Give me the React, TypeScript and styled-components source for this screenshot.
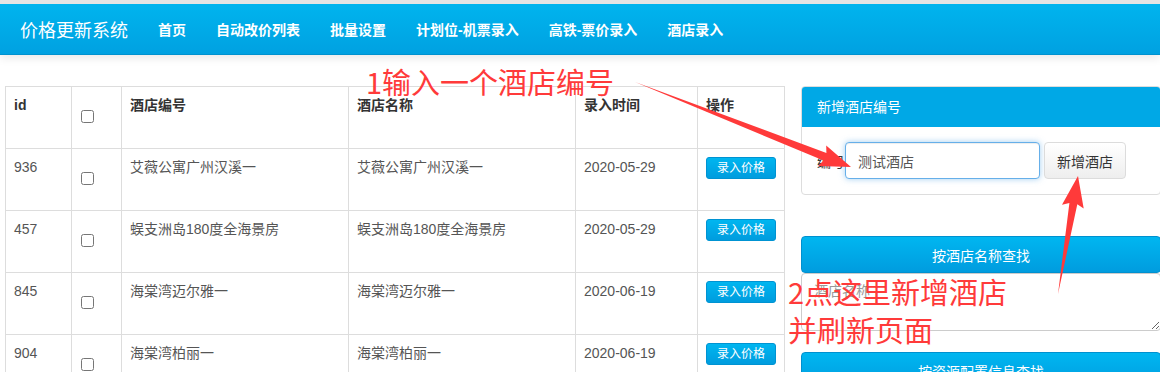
import React from 'react';
import styled, { createGlobalStyle } from 'styled-components';

const GlobalStyle = createGlobalStyle`
  html, body {
    margin: 0;
    padding: 0;
    background: #fff;
    overflow: hidden;
  }
  body {
    font-family: "Liberation Sans", "Noto Sans CJK SC", sans-serif;
    font-size: 14px;
    color: #555;
  }
`;

const Page = styled.div`
  position: relative;
  width: 1160px;
  height: 372px;
  overflow: hidden;
`;

const NavBar = styled.div`
  display: flex;
  align-items: center;
  height: 50px;
  border-top: 4px solid #e4e4e4;
  border-bottom: 1px solid #0092cf;
  background: linear-gradient(to bottom, #00b4ee 0%, #00a1e1 100%);
  box-shadow: 0 3px 9px rgba(0, 0, 0, 0.09);
  padding-left: 5px;
`;

const Brand = styled.div`
  padding: 0 15px;
  font-size: 18px;
  color: #fff;
`;

const NavLink = styled.a`
  padding: 0 15px;
  font-size: 14px;
  font-weight: bold;
  color: #fff;
  text-decoration: none;
`;

const Main = styled.div`
  display: flex;
  align-items: flex-start;
  gap: 16px;
  padding: 31px 0 0 5px;
`;

const Table = styled.table`
  border-collapse: collapse;
  width: 779px;
  flex-shrink: 0;
  table-layout: fixed;
  border: 1px solid #ddd;
`;

const Th = styled.th<{ $w: number }>`
  box-sizing: border-box;
  width: ${(p) => p.$w}px;
  text-align: left;
  vertical-align: top;
  padding: 8px;
  border: 1px solid #ddd;
  color: #333;
  font-weight: bold;
  line-height: 20px;
`;

const Td = styled.td`
  vertical-align: top;
  padding: 8px;
  border: 1px solid #ddd;
  line-height: 20px;
  color: #555;
`;

const Check = styled.input`
  display: block;
  width: 13px;
  height: 13px;
  margin: 15px 0 17px 1px;
`;

const PriceButton = styled.button`
  padding: 1px 10px;
  font-family: inherit;
  font-size: 12px;
  line-height: 18px;
  color: #fff;
  border: 1px solid #0093d2;
  border-radius: 3px;
  background: linear-gradient(to bottom, #00b6f0 0%, #009cde 100%);
`;

const Side = styled.div`
  width: 360px;
  flex-shrink: 0;
  display: flex;
  flex-direction: column;
`;

const Panel = styled.div`
  border: 1px solid #ddd;
  border-radius: 4px;
  overflow: hidden;
  margin-bottom: 41px;
`;

const PanelHead = styled.div`
  background: #00a8e6;
  color: #fff;
  padding: 10px 15px;
  line-height: 20px;
  font-size: 14px;
`;

const PanelBody = styled.div`
  display: flex;
  align-items: center;
  padding: 15px;
`;

const Label = styled.label`
  color: #333;
  font-size: 14px;
  width: 28px;
`;

const TextInput = styled.input`
  box-sizing: border-box;
  width: 195px;
  height: 37px;
  padding: 6px 12px;
  font-family: inherit;
  font-size: 14px;
  color: #555;
  border: 1px solid #66afe9;
  border-radius: 4px;
  outline: none;
  box-shadow: inset 0 1px 1px rgba(0, 0, 0, 0.075), 0 0 6px rgba(102, 175, 233, 0.6);
`;

const GrayButton = styled.button`
  box-sizing: border-box;
  margin-left: 4px;
  height: 37px;
  padding: 6px 12px;
  font-family: inherit;
  font-size: 14px;
  color: #333;
  border: 1px solid #dcdcdc;
  border-radius: 4px;
  background: linear-gradient(to bottom, #fff 0%, #eee 100%);
`;

const BlockButton = styled.button`
  box-sizing: border-box;
  width: 100%;
  height: 37px;
  font-family: inherit;
  font-size: 14px;
  color: #fff;
  border: 1px solid #0090cf;
  border-radius: 4px;
  background: linear-gradient(to bottom, #00b6f0 0%, #009cdf 100%);
`;

const TextArea = styled.textarea`
  box-sizing: border-box;
  display: block;
  width: 100%;
  height: 58px;
  padding: 6px 12px;
  font-family: inherit;
  font-size: 14px;
  border: 1px solid #ccc;
  border-radius: 4px;
  margin: 0 0 21px;
  resize: vertical;
  &::placeholder {
    color: #999;
  }
`;

const Overlay = styled.svg`
  position: absolute;
  left: 0;
  top: 0;
  pointer-events: none;
`;

const Note = styled.div<{ $x: number; $y: number }>`
  position: absolute;
  left: ${(p) => p.$x}px;
  top: ${(p) => p.$y}px;
  font-family: "Noto Sans CJK SC", sans-serif;
  font-size: 29px;
  line-height: 38px;
  color: #ff3a3a;
  white-space: nowrap;
`;

const rows = [
  { id: 936, name: '艾薇公寓广州汉溪一', date: '2020-05-29' },
  { id: 457, name: '蜈支洲岛180度全海景房', date: '2020-05-29' },
  { id: 845, name: '海棠湾迈尔雅一', date: '2020-06-19' },
  { id: 904, name: '海棠湾柏丽一', date: '2020-06-19' },
];

const navItems = ['首页', '自动改价列表', '批量设置', '计划位-机票录入', '高铁-票价录入', '酒店录入'];

const arrow = (tx: number, ty: number, hx: number, hy: number, headLen: number, headHalf: number, shaft: number) => {
  const dx = hx - tx;
  const dy = hy - ty;
  const len = Math.hypot(dx, dy);
  const ux = dx / len;
  const uy = dy / len;
  const nx = -uy;
  const ny = ux;
  const bx = hx - ux * headLen;
  const by = hy - uy * headLen;
  const pts = [
    [tx, ty],
    [bx + nx * shaft, by + ny * shaft],
    [bx + nx * headHalf - ux * 3, by + ny * headHalf - uy * 3],
    [hx, hy],
    [bx - nx * headHalf - ux * 3, by - ny * headHalf - uy * 3],
    [bx - nx * shaft, by - ny * shaft],
  ];
  return pts.map((p) => p.map((v) => v.toFixed(1)).join(',')).join(' ');
};

const App: React.FC = () => {
  return (
    <Page>
      <GlobalStyle />
      <NavBar>
        <Brand>价格更新系统</Brand>
        {navItems.map((n) => (
          <NavLink key={n}>{n}</NavLink>
        ))}
      </NavBar>
      <Main>
        <Table>
          <thead>
            <tr>
              <Th $w={66}>id</Th>
              <Th $w={50}>
                <Check type="checkbox" />
              </Th>
              <Th $w={227}>酒店编号</Th>
              <Th $w={227}>酒店名称</Th>
              <Th $w={122}>录入时间</Th>
              <Th $w={87}>操作</Th>
            </tr>
          </thead>
          <tbody>
            {rows.map((r) => (
              <tr key={r.id}>
                <Td>{r.id}</Td>
                <Td>
                  <Check type="checkbox" />
                </Td>
                <Td>{r.name}</Td>
                <Td>{r.name}</Td>
                <Td>{r.date}</Td>
                <Td>
                  <PriceButton>录入价格</PriceButton>
                </Td>
              </tr>
            ))}
          </tbody>
        </Table>
        <Side>
          <Panel>
            <PanelHead>新增酒店编号</PanelHead>
            <PanelBody>
              <Label>编号</Label>
              <TextInput defaultValue="测试酒店" />
              <GrayButton>新增酒店</GrayButton>
            </PanelBody>
          </Panel>
          <BlockButton>按酒店名称查找</BlockButton>
          <TextArea placeholder="酒店名称" />
          <BlockButton>按资源配置信息查找</BlockButton>
        </Side>
      </Main>
      <Overlay width={1160} height={372} viewBox="0 0 1160 372">
        <polygon points={arrow(635, 82, 851, 167, 28, 11, 4)} fill="#ff3a3a" />
        <polygon points={arrow(1058, 294, 1078, 176, 28, 11, 4)} fill="#ff3a3a" />
      </Overlay>
      <Note $x={366} $y={62}>1输入一个酒店编号</Note>
      <Note $x={788} $y={272}>
        2点这里新增酒店
        <br />
        并刷新页面
      </Note>
    </Page>
  );
};

export default App;
